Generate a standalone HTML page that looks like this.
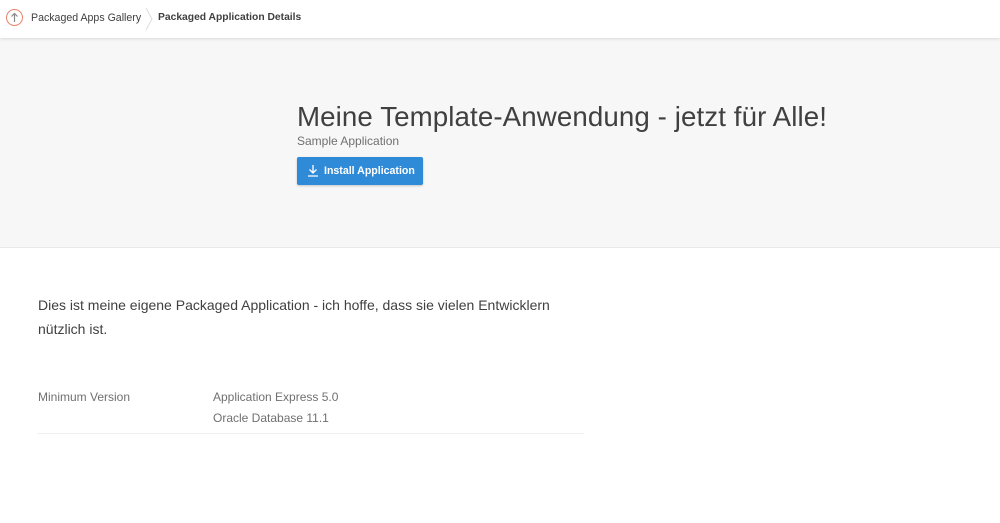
<!DOCTYPE html>
<html><head><meta charset="utf-8"><style>
body{margin:0;width:1000px;height:523px;overflow:hidden;font-family:"Liberation Sans",sans-serif;background:#fff;position:relative}
.hdr{position:absolute;left:0;top:0;width:1000px;height:38px;background:#fff;box-shadow:0 1px 3px rgba(0,0,0,.12);z-index:2}
.ic{position:absolute;left:6px;top:9px;width:17px;height:17px;border:1px solid #e8836b;border-radius:50%;box-sizing:border-box}
.bc{position:absolute;top:12px;font-size:10.6px;color:#404040}
.hero{position:absolute;left:0;top:38px;width:1000px;height:209px;background:#f7f7f7;border-bottom:1px solid #e8e8e8}
h1{position:absolute;left:297px;top:101px;margin:0;font-weight:normal;font-size:27.7px;color:#404040;white-space:nowrap;letter-spacing:.1px}
.sub{position:absolute;left:297px;top:134px;font-size:12px;color:#707070}
.btn{position:absolute;left:297px;top:157px;width:126px;height:28px;background:#2f8ad8;border-radius:2px;box-shadow:0 1px 2px rgba(0,0,0,.2);color:#fff;font-size:10.6px;font-weight:bold}
.p{position:absolute;left:38px;top:293px;font-size:14px;color:#404040;line-height:24px;width:560px}
.t{position:absolute;font-size:12px;color:#707070}
.ln{position:absolute;left:38px;top:433px;width:546px;height:1px;background:#eee}
</style></head><body>
<div class="hdr">
<div class="ic"><svg width="15" height="15" viewBox="0 0 15 15"><path d="M7.5 3.5V12M4.5 6.5L7.5 3.5L10.5 6.5" stroke="#888" stroke-width="1.2" fill="none"/></svg></div>
<div class="bc" style="left:31px">Packaged Apps Gallery</div>
<svg style="position:absolute;left:144px;top:6px" width="10" height="26"><path d="M2 2L8 13L2 24" stroke="#ddd" fill="none"/></svg>
<div class="bc" style="left:158px;font-weight:bold;font-size:10.3px">Packaged Application Details</div>
</div>
<div class="hero"></div>
<h1>Meine Template-Anwendung - jetzt für Alle!</h1>
<div class="sub">Sample Application</div>
<div class="btn"><svg style="position:absolute;left:10px;top:7px" width="12" height="13"><path d="M6 1V9M2.5 5.5L6 9L9.5 5.5M1 12H11" stroke="#fff" stroke-width="1.3" fill="none"/></svg><span style="position:absolute;left:27px;top:8px">Install Application</span></div>
<div class="p">Dies ist meine eigene Packaged Application - ich hoffe, dass sie vielen Entwicklern nützlich ist.</div>
<div class="t" style="left:38px;top:390px">Minimum Version</div>
<div class="t" style="left:213px;top:390px">Application Express 5.0</div>
<div class="t" style="left:213px;top:411px">Oracle Database 11.1</div>
<div class="ln"></div>
</body></html>
